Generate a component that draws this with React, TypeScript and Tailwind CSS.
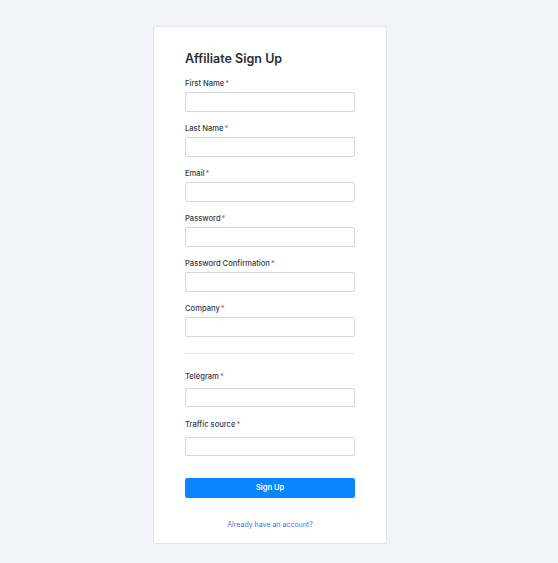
import React from "react";

type Field = { label: string; type?: string };

const mainFields: Field[] = [
  { label: "First Name" },
  { label: "Last Name" },
  { label: "Email", type: "email" },
  { label: "Password", type: "password" },
  { label: "Password Confirmation", type: "password" },
  { label: "Company" },
];

function Label({ text }: { text: string }) {
  return (
    <label className="block text-[7.6px] leading-[12px] font-medium text-[#343a46]">
      {text}
      <span className="text-[#e5484d] ml-[1px]">*</span>
    </label>
  );
}

export default function App() {
  return (
    <div
      className="min-h-screen bg-[#f3f4f8] flex justify-center pt-[26px] pr-[18px]"
      style={{ fontFamily: "Inter, 'Noto Sans', sans-serif" }}
    >
      <div className="w-[234px] h-[518px] bg-white border border-[#e3e5ea] rounded-[2px] px-[31px] pt-[24px]">
        <h1 className="text-[12.5px] leading-[16px] font-semibold text-[#2b2e33]">
          Affiliate Sign Up
        </h1>
        <div className="mt-[11px] flex flex-col gap-[11px]">
          {mainFields.map((f) => (
            <div key={f.label} className="flex flex-col gap-[2px]">
              <Label text={f.label} />
              <input
                type={f.type ?? "text"}
                className="h-[20px] w-full border border-[#d5d8de] rounded-[2px] px-2 text-[8px] outline-none"
              />
            </div>
          ))}
        </div>
        <div className="mt-[16px] h-px bg-[#e6e8ec]" />
        <div className="mt-[17px] flex flex-col">
          <Label text="Telegram" />
          <input className="mt-[5px] h-[19px] w-full border border-[#d5d8de] rounded-[2px] px-2 text-[8px] outline-none" />
          <div className="mt-[12px]">
            <Label text="Traffic source" />
          </div>
          <input className="mt-[6px] h-[19px] w-full border border-[#d5d8de] rounded-[2px] px-2 text-[8px] outline-none" />
        </div>
        <button className="mt-[22px] w-full h-[20px] bg-[#0a84ff] text-white text-[7.5px] font-semibold rounded-[2px]">
          Sign Up
        </button>
        <div className="mt-[21px] text-center text-[7px] leading-[12px]">
          <a href="#" className="text-[#4a6fe3]">
            Already have an account?
          </a>
        </div>
      </div>
    </div>
  );
}
